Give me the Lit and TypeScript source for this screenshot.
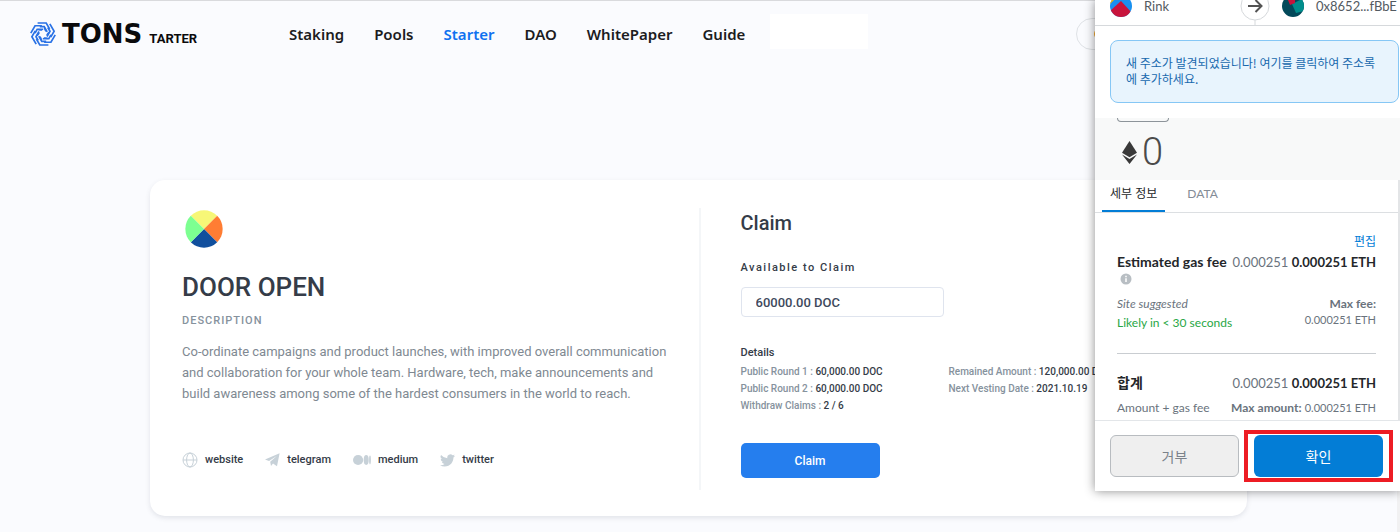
import { LitElement, html, svg, css } from "lit";
import { customElement } from "lit/decorators.js";

const NAV = ["Staking", "Pools", "Starter", "DAO", "WhitePaper", "Guide"];

const globe = svg`<svg width="16" height="16" viewBox="0 0 16 16" fill="none" stroke="#c7d1d8"><circle cx="8" cy="8" r="7"/><ellipse cx="8" cy="8" rx="3.4" ry="7"/><path d="M1 8H15"/></svg>`;
const telegram = svg`<svg width="15" height="14" viewBox="0 0 15 14" fill="#c7d1d8"><path d="M0 6.6 14.6.2 12 13.2 8 10.4 6 13 5.2 8.8 11.8 3 4 7.9Z"/></svg>`;
const medium = svg`<svg width="18" height="12" viewBox="0 0 18 12" fill="#c7d1d8"><circle cx="5.1" cy="6" r="5.1"/><ellipse cx="13.2" cy="6" rx="2.5" ry="4.9"/><ellipse cx="17" cy="6" rx=".9" ry="4.4"/></svg>`;
const twitter = svg`<svg width="15" height="13" viewBox="0 0 24 20" fill="#c7d1d8"><path d="M24 2.4a10 10 0 0 1-2.8.8A5 5 0 0 0 23.3.5a10 10 0 0 1-3.1 1.2A4.9 4.9 0 0 0 11.8 6.2 14 14 0 0 1 1.7 1a4.9 4.9 0 0 0 1.5 6.6 5 5 0 0 1-2.2-.6v.1a4.9 4.9 0 0 0 3.9 4.8 5 5 0 0 1-2.2.1 4.9 4.9 0 0 0 4.6 3.4A10 10 0 0 1 0 17.5 14 14 0 0 0 7.5 19.7C16.6 19.7 21.5 12.2 21.5 5.7V5A10 10 0 0 0 24 2.4Z"/></svg>`;

const LINKS = [
  { name: "website", icon: globe },
  { name: "telegram", icon: telegram },
  { name: "medium", icon: medium },
  { name: "twitter", icon: twitter },
];

const DETAILS = [
  ["Public Round 1 : ", "60,000.00 DOC"],
  ["Remained Amount : ", "120,000.00 DOC"],
  ["Public Round 2 : ", "60,000.00 DOC"],
  ["Next Vesting Date : ", "2021.10.19"],
  ["Withdraw Claims : ", "2 / 6"],
];

@customElement("site-header")
class SiteHeader extends LitElement {
  static styles = css`
    :host { display: flex; align-items: center; border-top: 1px solid #d9dadd; padding: 17px 0 18px 30px; }
    a { text-decoration: none; color: inherit; }
    .logo { display: flex; align-items: center; width: 170px; gap: 6px; color: #0a0a0c; white-space: nowrap; }
    .word { display: flex; align-items: baseline; gap: 7px; font: 700 26px/32px "DejaVu Sans", sans-serif; }
    .word small { font: 700 13px/20px Roboto, sans-serif; }
    nav { display: flex; gap: 30px; margin-left: 89px; font: 600 15px/24px "Noto Sans", sans-serif; color: #1c1c1e; }
    .active { color: #0f71f0; }
    .blank { width: 98px; height: 35px; background: #fff; margin: -4px 0 1px 25px; }
    .wallet { margin-left: auto; margin-right: 161px; width: 160px; height: 32px; box-sizing: border-box; border: 1px solid #dfe2e6; border-radius: 16px; background: none; padding: 0 0 0 17px; display: flex; align-items: center; }
    .dot { width: 12px; height: 12px; border-radius: 50%; background: #f5a623; }
  `;
  render() {
    const blades = [0, 60, 120, 180, 240, 300].map(
      (a) => svg`<path transform="rotate(${a})" d="M-5.4-11H3.2L6.6-5.1M-3.2-7.4H1.2L4.2-2.2M-4.6-4.4-2.6-4H-.8"/>`
    );
    return html`
      <a class="logo" href="#" aria-label="TONStarter">
        <svg width="26" height="24" viewBox="-13 -12 26 24" fill="none" stroke="#2a72e5" stroke-width="1.7">${blades}</svg>
        <span class="word"><span>TONS</span><small>TARTER</small></span>
      </a>
      <nav>${NAV.map((n) => html`<a href="#" class=${n === "Starter" ? "active" : ""}>${n}</a>`)}</nav>
      <div class="blank"></div>
      <button class="wallet" aria-label="Wallet"><span class="dot"></span></button>
    `;
  }
}

@customElement("project-card")
class ProjectCard extends LitElement {
  static styles = css`
    :host { display: grid; grid-template-columns: 1fr 1fr; box-sizing: border-box; width: 100%; max-width: 1097px; padding: 28px 32px 26px; background: #fff; border-radius: 15px; box-shadow: 0 2px 5px rgba(60, 70, 90, 0.13); font-family: Roboto, sans-serif; color: #304156; }
    h1, h2, h3, p { margin: 0; }
    .about { padding: 2px 28px 0 0; }
    .token { display: block; margin-left: 3px; }
    h1 { font-size: 26px; line-height: 32px; font-weight: 500; color: #353c48; margin-top: 23px; }
    h3 { font-size: 11px; line-height: 16px; font-weight: 500; letter-spacing: 1px; color: #86929d; margin-top: 10px; }
    p { font-size: 13px; line-height: 21px; color: #808992; margin-top: 12px; }
    .links { display: flex; gap: 22px; margin-top: 47px; font-size: 11px; line-height: 18px; font-weight: 500; }
    .links a { display: flex; align-items: center; gap: 7px; color: #353c48; text-decoration: none; }
    .claim { border-left: 2px solid #f4f6f8; padding: 1px 0 12px 40px; }
    h2 { font-size: 20px; line-height: 28px; font-weight: 500; color: #353c48; }
    label { display: block; margin-top: 23px; font-size: 11px; line-height: 16px; font-weight: 500; letter-spacing: 1.5px; color: #353c48; }
    input { display: block; box-sizing: border-box; width: 203px; height: 30px; margin-top: 11px; padding: 0 14px; border: 1px solid #dfe4ee; border-radius: 4px; background: #fff; font: 500 13px Roboto, sans-serif; color: #3e495c; }
    h4 { margin: 28px 0 2px; font-size: 11px; line-height: 16px; font-weight: 500; color: #353c48; }
    .details { display: grid; grid-template-columns: 208px 1fr; font-size: 10px; line-height: 17px; font-weight: 500; color: #86929d; white-space: nowrap; }
    .details b { font-weight: 500; color: #353c48; }
    button { display: block; width: 139px; height: 35px; margin-top: 29px; border: 0; border-radius: 5px; background: #257eee; color: #fff; font: 500 12px Roboto, sans-serif; }
  `;
  render() {
    return html`
      <section class="about">
        <svg class="token" width="38" height="38" viewBox="-19 -19 38 38">
          <path fill="#f7f777" d="M0 0-13.2-13.2A18.7 18.7 0 0 1 13.2-13.2Z"/>
          <path fill="#ff7d33" d="M0 0 13.2-13.2A18.7 18.7 0 0 1 13.2 13.2Z"/>
          <path fill="#114f9d" d="M0 0 13.2 13.2A18.7 18.7 0 0 1-13.2 13.2Z"/>
          <path fill="#7dff91" d="M0 0-13.2 13.2A18.7 18.7 0 0 1-13.2-13.2Z"/>
        </svg>
        <h1>DOOR OPEN</h1>
        <h3>DESCRIPTION</h3>
        <p>Co-ordinate campaigns and product launches, with improved overall communication and collaboration for your whole team. Hardware, tech, make announcements and build awareness among some of the hardest consumers in the world to reach.</p>
        <div class="links">${LINKS.map((l) => html`<a href="#">${l.icon}<span>${l.name}</span></a>`)}</div>
      </section>
      <section class="claim">
        <h2>Claim</h2>
        <label for="amount">Available to Claim</label>
        <input id="amount" readonly value="60000.00 DOC" />
        <h4>Details</h4>
        <div class="details">${DETAILS.map(([k, v]) => html`<div>${k}<b>${v}</b></div>`)}</div>
        <button>Claim</button>
      </section>
    `;
  }
}

@customElement("wallet-popup")
class WalletPopup extends LitElement {
  static styles = css`
    :host { position: absolute; top: 0; right: 0; width: 305px; overflow: hidden; background: #fff; color: #24272a; font-family: Lato, "Noto Sans CJK KR", sans-serif; font-size: 12px; line-height: 16px; white-space: nowrap; }
    .accounts { display: flex; align-items: flex-end; box-sizing: border-box; height: 26px; overflow: hidden; border-bottom: 1px solid #d6d9dc; }
    .row { display: grid; grid-template-columns: 130px 42px 1fr; align-items: center; height: 38px; padding-left: 15px; font-size: 13px; line-height: 12px; color: #535a61; flex: 1; }
    .who { display: flex; align-items: center; gap: 12px; }
    .row svg { display: block; }
    .alert { margin: 14px 1px 15px 15px; padding: 14px 20px 15px 15px; border: 1px solid #86c7f5; border-radius: 8px; background: #e8f4fd; color: #1768ad; white-space: normal; word-break: break-all; font-family: "Noto Sans CJK KR", sans-serif; }
    .value { background: #f8f9f9; padding: 0 0 8px 22px; }
    .chip { width: 50px; height: 3px; border: 1px solid #8d949a; border-top: 0; border-radius: 0 0 4px 4px; }
    .zero { display: flex; align-items: center; gap: 5px; margin-top: 10px; padding-left: 5px; font: 300 38px/40px Roboto, sans-serif; color: #4b4b4b; }
    .body { border-right: 2px solid #e3e5e7; }
    .tabs { display: flex; gap: 14px; padding-left: 7px; border-bottom: 1px solid #dcdfe2; }
    .tab { border: 0; background: none; padding: 6px 8px 8px; font: 400 12px/16px Lato, "Noto Sans CJK KR", sans-serif; color: #848c96; border-bottom: 2px solid transparent; }
    .tab.on { color: #24272a; border-color: #037dd6; }
    .fees { padding: 21px 22px 4px; color: #6a737d; }
    .split { display: flex; justify-content: space-between; }
    .edit { display: block; text-align: right; color: #037dd6; text-decoration: none; }
    .big { font-size: 13px; line-height: 20px; margin-top: 2px; }
    b { font-weight: 700; }
    .big b, .big strong { color: #24272a; }
    .big strong { font-size: 14px; }
    .info { display: block; margin: 1px 3px 0; }
    .notes { margin-top: 11px; }
    .likely { color: #28a745; margin-top: 3px; }
    .right { text-align: right; }
    .num { font-size: 11px; }
    hr { border: 0; border-top: 1px solid #c9cdd1; margin: 22px 0 19px; }
    .foot { margin-top: 7px; }
    .actions { display: grid; grid-template-columns: 1fr 1fr; gap: 15px; padding: 14px 17px 14px 15px; border-top: 1px solid #e3e6e9; }
    .btn { width: 100%; height: 42px; display: block; border-radius: 6px; font: 400 14px "Noto Sans CJK KR", sans-serif; }
    .no { background: #efefef; border: 1px solid #b8bcc0; color: #7b828a; }
    .yes { background: #037dd6; border: 0; color: #fff; }
    .mark { position: relative; }
    .frame { position: absolute; inset: -5px -10px; border: 4px solid #ed1c24; pointer-events: none; }
  `;
  render() {
    return html`
      <div class="accounts">
        <div class="row">
          <div class="who">
            <svg width="22" height="22" viewBox="0 0 22 22"><clipPath id="a"><circle cx="11" cy="11" r="11"/></clipPath><g clip-path="url(#a)"><path fill="#1890f0" d="M0 0H22V22H0Z"/><path fill="#c8143c" d="M11 6 22 18V22H0V16Z"/><path fill="#f5b800" d="M0 0H9L0 9Z"/></g></svg>
            <span>Rink</span>
          </div>
          <svg width="30" height="38" viewBox="0 0 30 38" fill="none" stroke="#d6d9dc"><path d="M15 33V38"/><circle cx="15" cy="19" r="14"/><path stroke="#535353" stroke-width="2" d="M8 19H21M15.5 13 21.5 19 15.5 25"/></svg>
          <div class="who">
            <svg width="22" height="22" viewBox="0 0 22 22"><clipPath id="b"><circle cx="11" cy="11" r="11"/></clipPath><g clip-path="url(#b)"><path fill="#03495a" d="M0 0H22V22H0Z"/><path fill="#018e8c" d="M10 9 22 3V16L14 18Z"/><path fill="#c8143c" d="M6 5 13 3V8L8 10Z"/></g></svg>
            <span>0x8652...fBbE</span>
          </div>
        </div>
      </div>
      <div class="alert">새 주소가 발견되었습니다! 여기를 클릭하여 주소록에 추가하세요.</div>
      <div class="value">
        <div class="chip"></div>
        <div class="zero">
          <svg width="15" height="23" viewBox="0 0 15 23" fill="#393939"><path d="M7.5 0 15 11.8 7.5 16.2 0 11.8Z"/><path d="M0 13.5 7.5 18 15 13.5 7.5 23Z"/></svg>0
        </div>
      </div>
      <div class="body">
        <div class="tabs"><button class="tab on">세부 정보</button><button class="tab">DATA</button></div>
        <div class="fees">
          <a class="edit" href="#">편집</a>
          <div class="split big"><strong>Estimated gas fee</strong><span>0.000251 <b>0.000251 ETH</b></span></div>
          <svg class="info" width="12" height="12" viewBox="0 0 12 12"><circle cx="6" cy="6" r="5.5" fill="#b8bec3"/><path stroke="#fff" stroke-width="1.5" d="M6 5.2V9M6 2.8V4.2"/></svg>
          <div class="split notes">
            <div><i>Site suggested</i><div class="likely">Likely in &lt; 30 seconds</div></div>
            <div class="right"><b>Max fee:</b><div class="num">0.000251 ETH</div></div>
          </div>
          <hr />
          <div class="split big"><strong>합계</strong><span>0.000251 <b>0.000251 ETH</b></span></div>
          <div class="split foot"><span>Amount + gas fee</span><span><b>Max amount:</b> <span class="num">0.000251 ETH</span></span></div>
        </div>
      </div>
      <div class="actions">
        <button class="btn no">거부</button>
        <div class="mark"><button class="btn yes">확인</button><div class="frame"></div></div>
      </div>
    `;
  }
}

@customElement("app-root")
class AppRoot extends LitElement {
  static styles = css`
    :host { display: flex; position: relative; min-height: 100vh; background: #fafbfe; overflow: hidden; }
    .page { flex: 1; min-width: 0; }
    main { display: flex; justify-content: center; padding: 112px 0 16px; }
    .track { width: 3px; background: #f1f1f2; }
    .popup { box-shadow: 0 0 10px rgba(0, 0, 0, 0.45); }
  `;
  render() {
    return html`
      <div class="page">
        <site-header></site-header>
        <main><project-card></project-card></main>
      </div>
      <div class="track"></div>
      <wallet-popup class="popup"></wallet-popup>
    `;
  }
}
